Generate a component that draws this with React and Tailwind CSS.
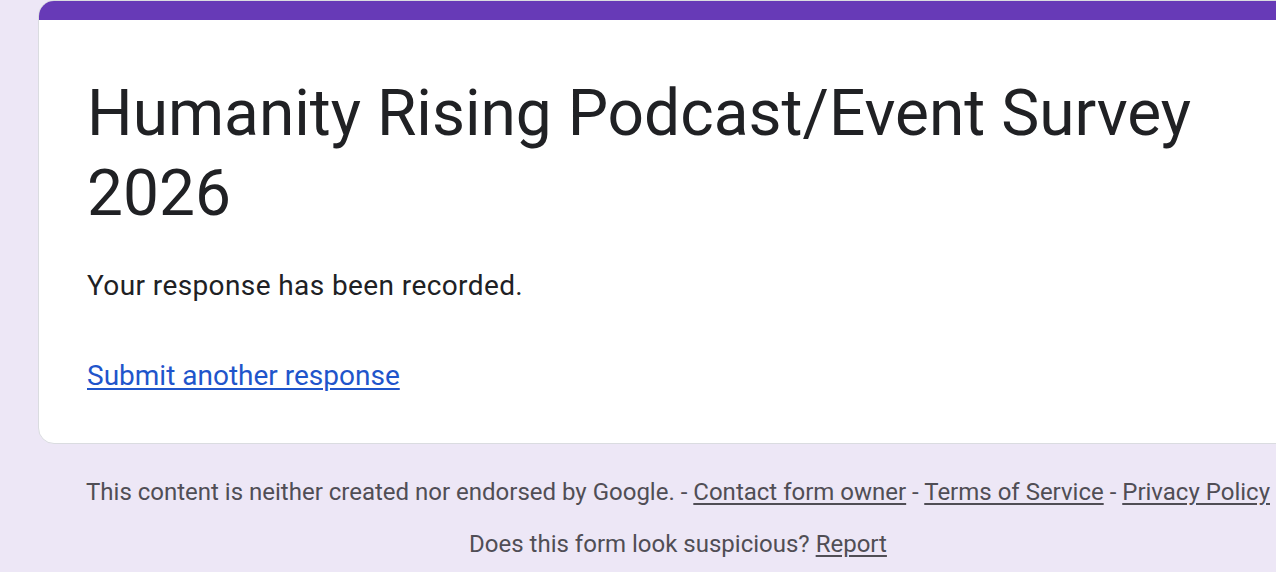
export default function App() {
  return (
    <div className="w-full h-[572px] overflow-hidden bg-[#ede7f6]" style={{ fontFamily: "Roboto, 'Liberation Sans', sans-serif" }}>
      <div className="ml-[38px] w-[1280px] shrink-0">
        <div className="rounded-[16px] bg-white border border-[#dadce0] overflow-hidden">
          <div className="h-[20px] bg-[#673ab7] -mx-px -mt-px"></div>
          <div className="pl-[48px] pr-[48px] pt-[54px] pb-[47px]">
            <h1 className="text-[64px] leading-[80px] text-[#202124] font-normal">
              Humanity Rising Podcast/Event Survey 2026
            </h1>
            <p className="mt-[32px] text-[28px] leading-[40px] tracking-[0.4px] text-[#202124]">
              Your response has been recorded.
            </p>
            <div className="mt-[50px] text-[28px] leading-[40px]">
              <a href="#" className="text-[#1f55cb] underline underline-offset-[3px] decoration-[2px]">
                Submit another response
              </a>
            </div>
          </div>
        </div>
        <div className="text-center text-[24px] text-[#504e55] mt-[28px]">
          <p className="leading-[40px]">
            This content is neither created nor endorsed by Google. -{" "}
            <a href="#" className="underline underline-offset-[3px]">Contact form owner</a> -{" "}
            <a href="#" className="underline underline-offset-[3px]">Terms of Service</a> -{" "}
            <a href="#" className="underline underline-offset-[3px]">Privacy Policy</a>
          </p>
          <p className="leading-[40px] mt-[12px]">
            Does this form look suspicious?{" "}
            <a href="#" className="underline underline-offset-[3px]">Report</a>
          </p>
        </div>
      </div>
    </div>
  );
}
